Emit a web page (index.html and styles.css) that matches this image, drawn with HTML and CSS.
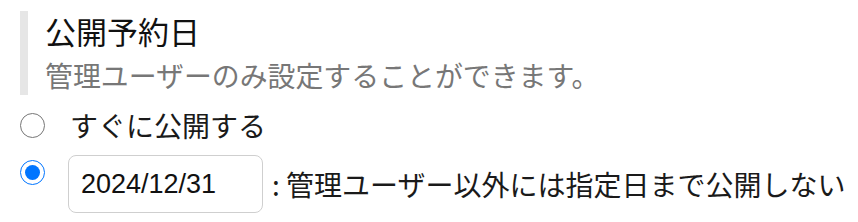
FILE: index.html
```html
<!DOCTYPE html>
<html lang="ja">
<head>
    <meta charset="UTF-8">
    <meta name="viewport" content="width=device-width, initial-scale=1.0">
    <title>公開予約日</title>
    <link rel="stylesheet" href="styles.css">
</head>
<body>
    <div class="field-head">
        <h2>公開予約日</h2>
        <p class="note">管理ユーザーのみ設定することができます。</p>
    </div>

    <div class="options">
        <label class="option">
            <input type="radio" name="publish" value="now">
            <span class="option-text">すぐに公開する</span>
        </label>
        <label class="option option-date">
            <input type="radio" name="publish" value="date" checked>
            <input type="text" class="date-input" value="2024/12/31">
            <span class="option-text">: 管理ユーザー以外には指定日まで公開しない</span>
        </label>
    </div>
</body>
</html>
```

FILE: styles.css
```css
body {
    margin: 0;
    font-family: "Noto Sans CJK JP", sans-serif;
    color: #1a1a1a;
    background-color: #fff;
}
.field-head {
    margin: 11px 0 0 20px;
    border-left: 8px solid #e6e6e6; /* quote style bar */
    padding-left: 17px;
}
.field-head h2 {
    margin: 0 0 4px;
    font-size: 31px;
    font-weight: normal;
    line-height: 40px;
    color: #111;
}
.note {
    margin: 0;
    font-size: 27.9px;
    line-height: 40px;
    color: #777;
}
.options {
    margin: 10px 0 0 20px;
}
.option {
    display: flex;
    align-items: center;
    height: 40px;
    font-size: 28px;
    line-height: 40px;
}
.option input[type="radio"] {
    width: 25px;
    height: 25px;
    margin: 0;
    flex-shrink: 0;
}
.option-text {
    margin-left: 25px;
    white-space: nowrap;
}
.option-date {
    align-items: flex-start;
    height: 58px;
    margin-top: 10px;
    line-height: 58px;
}
.option-date input[type="radio"] {
    margin-top: 5px;
}
.date-input {
    box-sizing: border-box;
    width: 195px;
    height: 58px;
    margin: 0 0 0 23px;
    padding: 0 12px;
    border: 1.5px solid #cfcfcf;
    border-radius: 8px;
    font-family: "Liberation Sans", Arial, sans-serif;
    font-size: 27px;
    color: #111;
}
.option-date .option-text {
    margin-left: 9px;
}
```
